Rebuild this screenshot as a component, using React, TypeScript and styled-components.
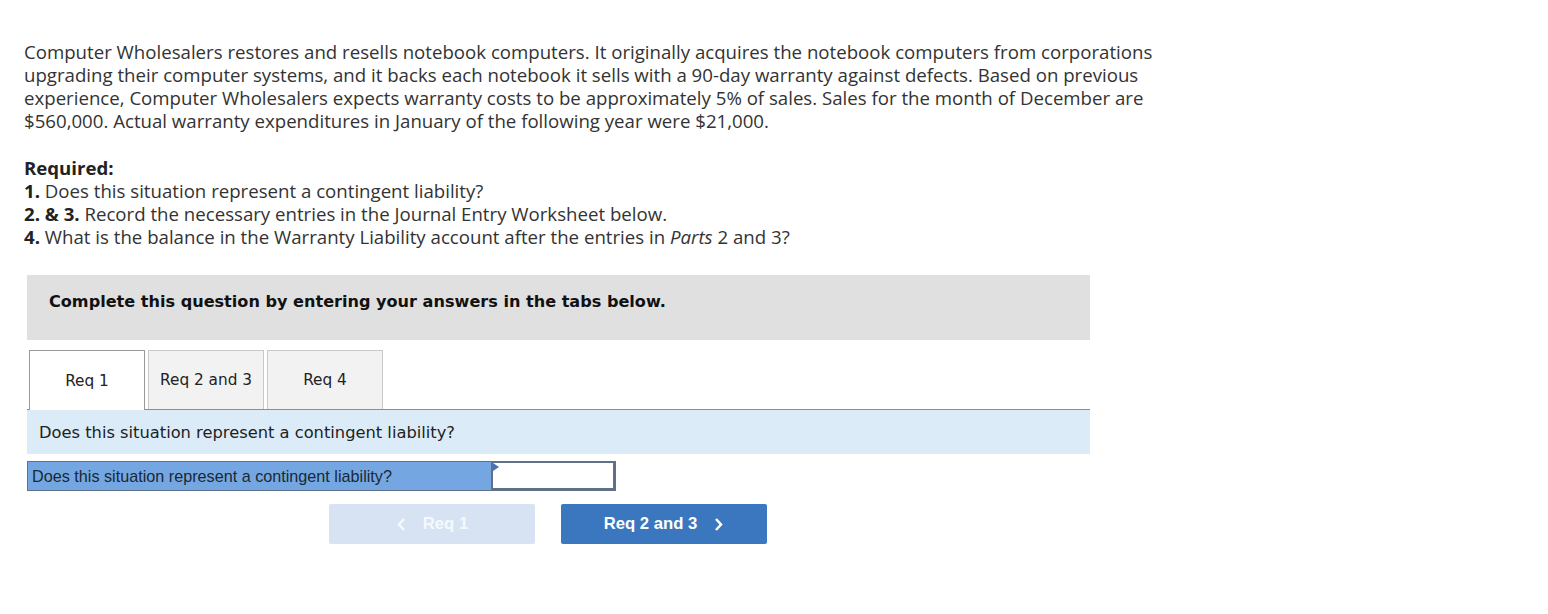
import styled, { createGlobalStyle } from "styled-components";

const GlobalStyle = createGlobalStyle`
  body {
    margin: 0;
    background: #ffffff;
    font-family: "Open Sans", "Liberation Sans", sans-serif;
  }
`;

const Page = styled.div`
  padding: 40px 0 0 24px;
  width: 1160px;
`;

const Intro = styled.p`
  margin: 0;
  font-size: 18.65px;
  line-height: 23px;
  color: #333333;
  white-space: nowrap;
`;

const Required = styled.div`
  margin-top: 24px;
  font-size: 18.65px;
  line-height: 23px;
  color: #333333;
`;

const Line = styled.div``;

const Strong = styled.strong`
  font-weight: 700;
  color: #222222;
`;

const Question = styled.div`
  margin: 27px 0 0 3px;
  width: 1063px;
`;

const Banner = styled.div`
  background: #e0e0e0;
  height: 65px;
  padding: 17px 22px 0;
  box-sizing: border-box;
  font-family: "DejaVu Sans", Verdana, sans-serif;
  font-weight: 700;
  font-size: 16.1px;
  color: #111111;
`;

const Tabs = styled.div`
  display: flex;
  gap: 3px;
  margin-top: 10px;
  padding-left: 2px;
  border-bottom: 1px solid #8a8f94;
  height: 59px;
`;

const Tab = styled.div<{ $active?: boolean }>`
  width: 116px;
  box-sizing: border-box;
  height: ${(p) => (p.$active ? "60px" : "59px")};
  border: 1px solid ${(p) => (p.$active ? "#999999" : "#c9c9c9")};
  border-bottom: 0;
  background: ${(p) => (p.$active ? "#ffffff" : "#f2f2f2")};
  display: flex;
  align-items: center;
  justify-content: center;
  font-family: "DejaVu Sans", Verdana, sans-serif;
  font-size: 15.3px;
  color: #222222;
  position: relative;
  z-index: 1;
`;

const Prompt = styled.div`
  background: #dcebf8;
  height: 44px;
  display: flex;
  align-items: center;
  padding-left: 12px;
  font-family: "DejaVu Sans", Verdana, sans-serif;
  font-size: 16.3px;
  color: #222222;
`;

const AnswerRow = styled.div`
  display: flex;
  margin-top: 7px;
  width: 589px;
  height: 30px;
  border: 1px solid #5f7186;
  box-sizing: border-box;
`;

const AnswerLabel = styled.div`
  width: 463px;
  background: #74a7e2;
  display: flex;
  align-items: center;
  padding-left: 4px;
  box-sizing: border-box;
  font-family: "Liberation Sans", Arial, sans-serif;
  font-size: 16.2px;
  color: #1b2733;
  white-space: nowrap;
`;

const AnswerCell = styled.div`
  flex: 1;
  background: #ffffff;
  border: 2px solid #5f7186;
  border-top-width: 1px;
  position: relative;
`;

const Marker = styled.span`
  position: absolute;
  left: 0;
  top: 0;
  width: 0;
  height: 0;
  border-top: 4px solid transparent;
  border-bottom: 4px solid transparent;
  border-left: 6px solid #3d72c4;
`;

const Nav = styled.div`
  display: flex;
  gap: 26px;
  margin: 13px 0 0 302px;
`;

const NavButton = styled.button<{ $disabled?: boolean }>`
  width: 206px;
  height: 40px;
  border: none;
  border-radius: 2px;
  background: ${(p) => (p.$disabled ? "#d7e3f3" : "#3a77bf")};
  color: ${(p) => (p.$disabled ? "#f5f8fd" : "#ffffff")};
  font-family: "Liberation Sans", Arial, sans-serif;
  font-weight: 700;
  font-size: 16.7px;
  display: flex;
  align-items: center;
  justify-content: center;
  gap: 16px;
  padding: 0;
`;

const Chevron = styled.svg`
  width: 11px;
  height: 15px;
`;

function ChevronIcon({ dir }: { dir: "left" | "right" }) {
  return (
    <Chevron viewBox="0 0 11 15">
      <path
        d={dir === "left" ? "M8 2 L3 7.5 L8 13" : "M3 2 L8 7.5 L3 13"}
        fill="none"
        stroke="currentColor"
        strokeWidth="2.5"
      />
    </Chevron>
  );
}

export default function App() {
  return (
    <>
      <GlobalStyle />
      <Page>
        <Intro>
          <Line>
            Computer Wholesalers restores and resells notebook computers. It originally acquires the
            notebook computers from corporations
          </Line>
          <Line>
            upgrading their computer systems, and it backs each notebook it sells with a 90-day
            warranty against defects. Based on previous
          </Line>
          <Line>
            experience, Computer Wholesalers expects warranty costs to be approximately 5% of sales.
            Sales for the month of December are
          </Line>
          <Line>$560,000. Actual warranty expenditures in January of the following year were $21,000.</Line>
        </Intro>
        <Required>
          <Line>
            <Strong>Required:</Strong>
          </Line>
          <Line>
            <Strong>1.</Strong> Does this situation represent a contingent liability?
          </Line>
          <Line>
            <Strong>2. &amp; 3.</Strong> Record the necessary entries in the Journal Entry Worksheet
            below.
          </Line>
          <Line>
            <Strong>4.</Strong> What is the balance in the Warranty Liability account after the
            entries in <em>Parts</em> 2 and 3?
          </Line>
        </Required>
        <Question>
          <Banner>Complete this question by entering your answers in the tabs below.</Banner>
          <Tabs>
            <Tab $active>Req 1</Tab>
            <Tab>Req 2 and 3</Tab>
            <Tab>Req 4</Tab>
          </Tabs>
          <Prompt>Does this situation represent a contingent liability?</Prompt>
          <AnswerRow>
            <AnswerLabel>Does this situation represent a contingent liability?</AnswerLabel>
            <AnswerCell>
              <Marker />
            </AnswerCell>
          </AnswerRow>
          <Nav>
            <NavButton $disabled>
              <ChevronIcon dir="left" />
              Req 1
            </NavButton>
            <NavButton>
              Req 2 and 3
              <ChevronIcon dir="right" />
            </NavButton>
          </Nav>
        </Question>
      </Page>
    </>
  );
}
